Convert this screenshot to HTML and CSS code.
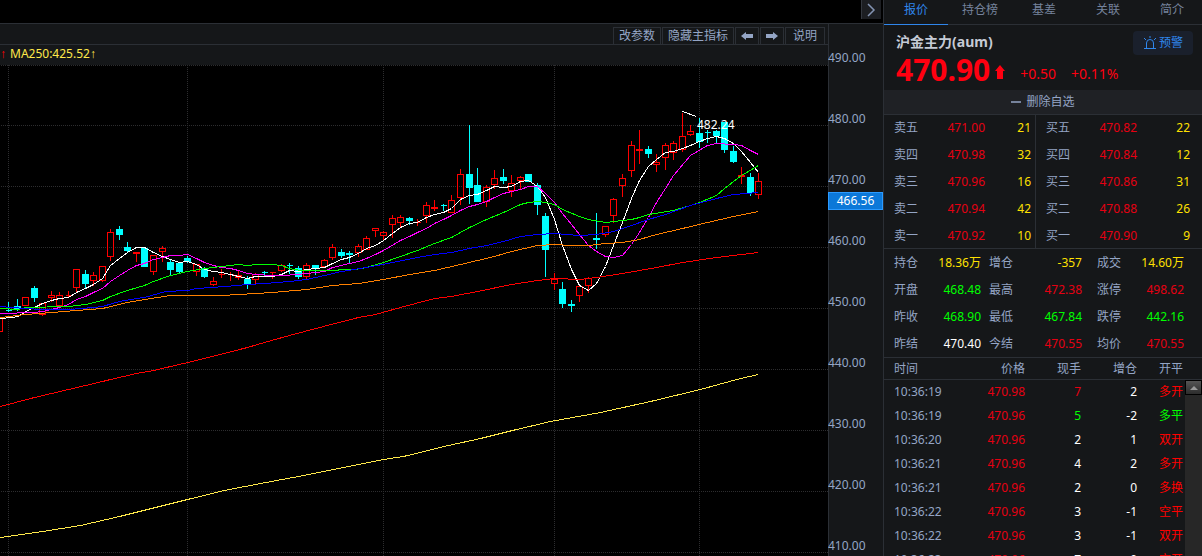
FILE: index.html
```
<!DOCTYPE html>
<html lang="zh-CN">
<head>
<meta charset="utf-8">
<title>沪金主力(aum)</title>
<link rel="stylesheet" href="styles.css">
</head>
<body>
<div class="app">
  <main class="market">
    <header class="topbar">
      <button class="collapse" type="button" aria-label="收起"><svg width="9" height="14" viewBox="0 0 9 14"><path d="M1 1l6 6-6 6"/></svg></button>
    </header>
    <div class="workspace">
      <section class="chart">
        <nav class="toolbar">
          <button class="tool" type="button">改参数</button>
          <button class="tool" type="button">隐藏主指标</button>
          <button class="tool tool-arrow" type="button" aria-label="向左"><svg width="12" height="8" viewBox="0 0 12 8"><path d="M0 4l5-4v2h7v4H5v2z"/></svg></button>
          <button class="tool tool-arrow" type="button" aria-label="向右"><svg width="12" height="8" viewBox="0 0 12 8"><path d="M12 4L7 0v2H0v4h7v2z"/></svg></button>
          <button class="tool tool-help" type="button">说明</button>
        </nav>
        <div class="averages"><span class="rise arrow">↑</span><span class="ma250">MA250:425.52<span class="arrow">↑</span></span></div>
        <svg class="plot" viewBox="0 65 828 491" preserveAspectRatio="none">
          <g class="grid" transform="translate(0 .5)">
            <path d="M1 65H828M1 125H828M1 186H828M1 247H828M1 308H828M1 369H828M1 430H828M1 491H828M1 552H828"/>
          </g>
          <g class="grid" transform="translate(.5 0)">
            <path d="M8 65V556M187 65V556M383 65V556M554 65V556M699 65V556"/>
          </g>
          <g class="pixel" transform="translate(.5 .5)">
            <path class="up" d="M-4 317h6v14h-6zM22 297h6v8h-6zM39 303h6v11h-6zM48 295h6v2h-6zM56 295h6v10h-6zM73 269h6v18h-6zM90 275h6v5h-6zM99 266h6v14h-6zM107 232h6v24h-6zM133 252h6v1h-6zM150 255h6v16h-6zM159 248h6v3h-6zM193 264h6v7h-6zM210 281h6v3h-6zM235 275h6v2h-6zM252 274h6v5h-6zM278 265h6v5h-6zM303 265h6v11h-6zM321 260h6v6h-6zM329 247h6v10h-6zM355 246h6v6h-6zM363 238h6v11h-6zM372 228h6v2h-6zM380 232h6v3h-6zM389 218h6v6h-6zM397 217h6v5h-6zM423 205h6v10h-6zM431 207h6v1h-6zM448 200h6v12h-6zM457 174h6v23h-6zM483 187h6v14h-6zM491 178h6v6h-6zM508 183h6v7h-6zM517 177h6v3h-6zM551 279h6v4h-6zM576 286h6v9h-6zM585 278h6v7h-6zM602 226h6v8h-6zM610 199h6v16h-6zM619 178h6v7h-6zM628 145h6v25h-6zM636 149h6v1h-6zM653 162h6v2h-6zM662 145h6v12h-6zM670 143h6v9h-6zM679 136h6v13h-6zM687 131h6v3h-6zM738 175h6v1h-6zM755 181h6v13h-6z"/>
            <path class="up" d="M65 295h6M68 290v7M218 274h6M221 268v9M227 274h6M230 271v9M269 272h6M272 272v6M414 222h6M417 218v7"/>
            <path class="up" d="M25 296v1M42 302v1M42 314v1M51 290v5M51 297v4M59 291v4M76 268v1M76 287v5M93 271v4M93 280v5M102 265v1M102 280v1M110 228v4M110 256v4M136 251v10M153 254v1M153 271v3M162 245v3M162 251v10M196 271v4M213 276v5M213 284v1M238 270v5M238 277v2M255 272v2M255 279v4M281 263v2M281 270v1M306 262v3M306 276v2M324 258v2M332 243v4M332 257v2M358 243v3M358 252v4M366 235v3M375 227v1M375 230v6M383 230v2M383 235v4M392 214v4M392 224v13M400 214v3M400 222v5M426 201v4M426 215v7M434 199v11M451 194v6M460 168v6M460 197v7M486 184v3M486 201v5M494 169v9M494 184v4M511 174v9M511 190v6M520 175v2M520 180v8M554 272v7M554 283v6M579 284v2M579 295v6M588 276v2M588 285v7M605 234v2M613 197v2M613 215v7M622 173v5M622 185v11M631 140v5M631 170v6M639 129v34M656 153v9M656 164v7M665 142v3M665 157v12M673 140v3M673 152v7M682 112v24M682 149v2M690 124v7M690 134v1M741 166v17M758 172v9M758 194v4"/>
            <path class="down" d="M5 310h6M8 301v10M17 298v12M34 285v16M85 269v18M119 225v14M127 241v11M144 248v18M170 259v15M179 263v10M187 255v7M204 266v11M247 275v13M261 272h6M264 270v6M286 265h6M289 262v11M298 265v13M315 266v8M341 248v9M349 250v12M409 216v8M440 205h6M443 203v7M469 124v79M477 167v33M503 168v15M528 173v8M537 182v32M545 212v64M562 281v26M571 299v12M596 212v36M648 145v12M699 117v30M704 132h6M707 129v13M716 129v13M724 122v30M733 145v17M750 172v23"/>
          </g>
          <path class="down-body" d="M14 306h7v3h-7zM31 288h7v10h-7zM82 274h7v10h-7zM116 229h7v6h-7zM124 247h7v4h-7zM141 248h7v19h-7zM167 262h7v8h-7zM176 263h7v9h-7zM184 258h7v4h-7zM201 268h7v9h-7zM244 279h7v6h-7zM295 268h7v9h-7zM312 265h7v4h-7zM338 252h7v4h-7zM346 253h7v2h-7zM406 218h7v3h-7zM466 174h7v14h-7zM474 185h7v17h-7zM500 177h7v4h-7zM525 174h7v8h-7zM534 185h7v20h-7zM542 216h7v34h-7zM559 289h7v15h-7zM568 304h7v2h-7zM593 238h7v2h-7zM645 149h7v5h-7zM696 133h7v9h-7zM713 131h7v5h-7zM721 122h7v28h-7zM730 151h7v11h-7zM747 177h7v16h-7z"/>
          <g class="pixel" transform="translate(.5 .5)">
            <polyline class="ma5" points="0,318 11,317 18,316 25,311 34,307 42,303 51,300 59,298 68,297 76,292 85,288 93,284 102,278 110,265 119,258 127,252 136,247 144,247 153,252 162,256 170,259 179,262 187,261 196,264 204,269 213,271 221,272 230,274 238,276 247,278 255,276 272,276 281,274 289,270 298,271 306,269 315,268 324,267 332,263 341,259 349,257 358,253 366,248 375,245 383,240 392,233 400,227 409,223 417,222 426,217 434,214 443,212 451,208 460,199 469,195 477,194 486,190 494,186 503,187 511,186 520,181 528,180 537,186 545,197 554,219 562,245 571,269 579,285 588,290 596,283 605,266 613,245 622,222 631,198 639,180 648,166 656,159 665,152 673,151 682,148 690,145 699,141 707,138 716,136 724,138 733,143 741,151 750,162 758,172"/>
            <polyline class="ma10" points="0,313 34,312 42,311 51,309 59,307 68,304 76,299 85,296 93,292 102,288 110,281 119,275 127,270 136,265 144,263 153,259 162,257 170,255 179,255 187,254 196,258 204,262 213,265 221,267 230,268 238,270 247,273 255,274 272,275 281,275 298,274 306,273 324,271 332,267 349,263 358,261 366,258 375,254 383,250 400,240 409,236 417,232 426,228 434,223 443,219 451,215 460,210 469,206 477,204 486,201 494,197 503,193 511,191 520,189 528,186 537,186 545,193 554,202 562,213 571,224 579,234 588,245 596,251 605,256 613,257 622,255 631,244 639,232 648,217 656,202 665,188 673,175 690,155 707,145 716,143 733,144 741,145 750,150 758,154"/>
            <polyline class="ma20" points="0,308 18,309 25,307 68,306 85,304 102,300 110,296 127,290 144,285 153,281 170,275 187,271 204,268 221,266 238,264 247,265 256,264 272,264 281,265 289,268 300,270 335,270 341,269 354,269 366,267 383,262 400,256 417,250 434,243 451,237 469,227 486,219 503,212 520,204 528,202 537,201 545,202 554,204 562,209 579,216 588,219 605,222 622,220 631,219 639,217 648,214 673,210 690,205 699,202 716,195 724,188 741,175 758,165"/>
            <polyline class="ma40" points="0,306 11,307 25,308 42,309 68,309 93,307 102,306 119,301 136,298 144,297 165,291 187,290 196,288 225,286 247,284 264,283 289,281 306,279 324,275 341,271 366,267 392,262 417,257 434,254 451,252 469,248 486,245 503,241 520,236 537,234 554,233 579,235 596,234 613,231 631,225 648,219 665,214 690,205 716,198 733,194 758,192"/>
            <polyline class="ma60" points="0,317 25,314 51,312 76,310 102,308 127,302 144,299 170,295 221,295 255,293 272,292 306,289 332,285 358,283 383,279 409,274 434,270 460,264 477,260 494,256 511,251 537,245 554,244 571,245 588,245 605,243 622,242 639,239 656,234 682,228 707,222 733,216 758,211"/>
            <polyline class="ma120" points="0,406 34,397 68,389 102,381 110,379 136,373 153,370 196,360 247,347 264,342 289,335 323,326 358,317 375,314 400,307 434,298 451,296 477,291 511,284 537,280 554,278 580,279 596,277 622,273 656,267 682,262 716,257 758,252"/>
            <polyline class="line250" points="0,537 42,531 80,525 119,516 159,506 187,499 224,490 260,483 298,476 348,466 383,459 403,456 448,445 480,438 512,430 550,421 600,412 650,401 700,389 740,378 758,374"/>
            <path class="ma5" d="M682 111L696 116"/>
          </g>
          <text class="peak" x="697" y="129">482.24</text>
        </svg>
      </section>
      <aside class="axis">
        <span>490.00</span><span>480.00</span><span>470.00</span><span>460.00</span><span>450.00</span><span>440.00</span><span>430.00</span><span>420.00</span><span>410.00</span>
        <output class="cursor-price">466.56</output>
      </aside>
    </div>
  </main>

  <aside class="panel">
    <nav class="tabs">
      <button class="tab tab-active" type="button">报价</button>
      <button class="tab" type="button">持仓榜</button>
      <button class="tab" type="button">基差</button>
      <button class="tab" type="button">关联</button>
      <button class="tab" type="button">简介</button>
    </nav>
    <section class="quote">
      <div class="quote-head">
        <h1 class="name">沪金主力(aum)</h1>
        <button class="alert" type="button"><svg width="14" height="14" viewBox="0 0 14 14"><path d="M1 12.5h12M3.500 12V7a3.500 3.500 0 0 1 7 0v5M7 0v2M1 2l2 2M13 2l-2 2"/></svg>预警</button>
      </div>
      <div class="price-line">
        <strong class="last">470.90</strong>
        <svg class="price-arrow" width="10" height="14" viewBox="0 0 10 14"><path d="M5 0l5 6H8v8H2V6H0z"/></svg>
        <span class="change">+0.50</span>
        <span class="change">+0.11%</span>
      </div>
    </section>
    <button class="watch" type="button"><svg width="10" height="2" viewBox="0 0 10 2"><path d="M0 0h10v2H0z"/></svg>删除自选</button>

    <table class="book">
      <colgroup><col class="c-label"><col class="c-price"><col class="c-ask"><col class="c-label"><col class="c-price"><col class="c-bid"></colgroup>
      <tbody>
        <tr><th>卖五</th><td class="red">471.00</td><td class="yellow ask">21</td><th>买五</th><td class="red">470.82</td><td class="yellow bid">22</td></tr>
        <tr><th>卖四</th><td class="red">470.98</td><td class="yellow ask">32</td><th>买四</th><td class="red">470.84</td><td class="yellow bid">12</td></tr>
        <tr><th>卖三</th><td class="red">470.96</td><td class="yellow ask">16</td><th>买三</th><td class="red">470.86</td><td class="yellow bid">31</td></tr>
        <tr><th>卖二</th><td class="red">470.94</td><td class="yellow ask">42</td><th>买二</th><td class="red">470.88</td><td class="yellow bid">26</td></tr>
        <tr><th>卖一</th><td class="red">470.92</td><td class="yellow ask">10</td><th>买一</th><td class="red">470.90</td><td class="yellow bid">9</td></tr>
      </tbody>
    </table>

    <table class="stats">
      <colgroup><col class="s-label1"><col class="s-value1"><col class="s-label2"><col class="s-value2"><col class="s-label3"><col class="s-value3"></colgroup>
      <tbody>
        <tr><th>持仓</th><td class="yellow">18.36万</td><th class="mid">增仓</th><td class="yellow">-357</td><th class="far">成交</th><td class="yellow end">14.60万</td></tr>
        <tr><th>开盘</th><td class="green">468.48</td><th class="mid">最高</th><td class="red">472.38</td><th class="far">涨停</th><td class="red end">498.62</td></tr>
        <tr><th>昨收</th><td class="green">468.90</td><th class="mid">最低</th><td class="green">467.84</td><th class="far">跌停</th><td class="green end">442.16</td></tr>
        <tr><th>昨结</th><td class="white">470.40</td><th class="mid">今结</th><td class="red">470.55</td><th class="far">均价</th><td class="red end">470.55</td></tr>
      </tbody>
    </table>

    <section class="trades-box">
      <table class="trades">
        <colgroup><col class="t-time"><col class="t-price"><col class="t-vol"><col class="t-vol"><col class="t-kind"></colgroup>
        <thead><tr><th class="time">时间</th><th>价格</th><th>现手</th><th>增仓</th><th class="kind">开平</th></tr></thead>
        <tbody>
          <tr><td class="time">10:36:19</td><td class="red">470.98</td><td class="red">7</td><td>2</td><td class="kind bright">多开</td></tr>
          <tr><td class="time">10:36:19</td><td class="red">470.96</td><td class="green">5</td><td>-2</td><td class="kind green">多平</td></tr>
          <tr><td class="time">10:36:20</td><td class="red">470.96</td><td>2</td><td>1</td><td class="kind bright">双开</td></tr>
          <tr><td class="time">10:36:21</td><td class="red">470.96</td><td>4</td><td>2</td><td class="kind bright">多开</td></tr>
          <tr><td class="time">10:36:21</td><td class="red">470.96</td><td>2</td><td>0</td><td class="kind bright">多换</td></tr>
          <tr><td class="time">10:36:22</td><td class="red">470.96</td><td>3</td><td>-1</td><td class="kind bright">空平</td></tr>
          <tr><td class="time">10:36:22</td><td class="red">470.96</td><td>3</td><td>-1</td><td class="kind bright">双开</td></tr>
          <tr><td class="time">10:36:23</td><td class="red">470.96</td><td>7</td><td>0</td><td class="kind bright">空开</td></tr>
        </tbody>
      </table>
      <div class="scrollbar"><button class="scroll-up" type="button" aria-label="向上滚动"><svg width="8" height="4" viewBox="0 0 8 4"><path d="M4 0l4 4H0z"/></svg></button></div>
    </section>
  </aside>
</div>
</body>
</html>
```
FILE: styles.css
```
* { box-sizing: border-box; }
body {
  margin: 0;
  background: #151719;
  color: #94a5c5;
  font: 12px/16px "Noto Sans", "Noto Sans CJK SC", sans-serif;
}
button {
  margin: 0;
  padding: 0;
  border: 0;
  background: none;
  color: inherit;
  font: inherit;
}
svg { display: block; }

.app { display: flex; height: 100vh; overflow: hidden; }
.market { flex: 1; min-width: 0; display: flex; flex-direction: column; background: #151719; }
.topbar {
  display: flex;
  justify-content: flex-end;
  align-items: flex-start;
  height: 24px;
  padding-right: 2px;
  background: #000;
  border-bottom: 1px solid #2b2f35;
}
.collapse {
  display: flex;
  justify-content: center;
  align-items: center;
  width: 20px;
  height: 19px;
  background: #1c1e22;
  border-left: 1px solid #33373e;
}
.collapse path { fill: none; stroke: #8494b3; stroke-width: 1.5; }

.workspace { flex: 1; min-height: 0; display: flex; }
.chart { flex: 1; min-width: 0; display: flex; flex-direction: column; }
.toolbar {
  display: flex;
  justify-content: flex-end;
  align-items: flex-end;
  height: 21px;
  padding-right: 3px;
  border-bottom: 1px solid #2b2f35;
}
.tool {
  display: flex;
  justify-content: center;
  align-items: center;
  height: 17px;
  padding: 0 5px;
  margin-left: 1px;
  border: 1px solid #2b2f35;
  border-bottom: 0;
}
.tool-arrow { width: 24px; }
.tool-arrow svg { flex: none; }
.tool-arrow path { fill: #94a5c5; }
.tool-help { padding: 0 7px; }
.averages { display: flex; gap: 4px; height: 20px; line-height: 18px; }
.arrow { font-family: "Liberation Sans", sans-serif; }
.rise { color: #f00; }
.ma250 { color: #ffe94a; }
.plot { flex: 1; min-height: 0; width: 100%; background: #000; }
.pixel, .grid, .down-body { shape-rendering: crispEdges; fill: none; }
.grid { stroke: #2d2d2f; stroke-dasharray: 1 1; }
.up { stroke: #f00; }
.down { stroke: #0ff; }
.down-body { fill: #0ff; }
.ma5 { stroke: #fff; }
.ma10 { stroke: #f0f; }
.ma20 { stroke: #0f0; }
.ma40 { stroke: #00f; }
.ma60 { stroke: #ff8000; }
.ma120 { stroke: #f00; }
.line250 { stroke: #ffe94a; }
.peak { fill: #fff; }

.axis {
  position: relative;
  width: 55px;
  padding-top: 3px;
  overflow: hidden;
  box-shadow: inset 1px 0 #2b2f35;
}
.axis span { display: block; line-height: 61px; }
.cursor-price {
  position: absolute;
  top: 168px;
  left: 0;
  width: 100%;
  height: 18px;
  border: 1px solid #2b9aff;
  background: #0c78d8;
  color: #fff;
  line-height: 16px;
  text-align: center;
}

.panel {
  display: flex;
  flex-direction: column;
  width: 319px;
  border-left: 1px solid #2b2f35;
}
.tabs {
  display: grid;
  grid-template-columns: repeat(5, 1fr);
  flex: none;
  height: 25px;
  margin-right: -2px;
  border-bottom: 1px solid #2b2f35;
}
.tab { height: 25px; padding-bottom: 4px; color: #76839c; border-bottom: 1px solid transparent; }
.tab-active { color: #2f86ec; border-bottom-color: #2f86ec; }
.quote { flex: none; height: 65px; padding: 6px 9px 0 12px; }
.quote-head { display: flex; justify-content: space-between; height: 24px; }
.name { margin: 0; color: #c5cbd6; font-size: 14px; line-height: 22px; }
.alert {
  display: flex;
  align-items: center;
  justify-content: center;
  gap: 2px;
  width: 60px;
  height: 24px;
  border-radius: 4px;
  background: #1a202c;
  color: #2f86ec;
}
.alert path { fill: none; stroke: #2f86ec; }
.price-line { display: flex; align-items: center; height: 30px; color: #ff0010; }
.last { font-size: 30px; line-height: 30px; }
.price-arrow { margin: 4px 15px 0 5px; }
.price-arrow path { fill: #ff0010; }
.change { margin: 8px 15px 0 0; font-size: 14px; }
.watch {
  display: flex;
  flex: none;
  justify-content: center;
  align-items: center;
  gap: 5px;
  height: 24px;
  background: #1f2125;
}
.watch path { fill: #76839c; }

table { flex: none; width: 100%; table-layout: fixed; border-collapse: separate; border-spacing: 0; }
th, td { padding: 0; text-align: right; font-weight: 400; white-space: nowrap; }
.book { border-top: 1px solid #2b2f35; }
.book tr, .stats tr { height: 27px; }
.book th, .book td { padding-bottom: 2px; }
.book tr:last-child { height: 25px; }
.book tr:last-child > * { padding-bottom: 0; }
.book th, .stats th { padding-left: 10px; text-align: left; }
.book .ask { padding-right: 4px; border-right: 1px solid #2b2f35; }
.book .bid { padding-right: 12px; }
.c-label { width: 44px; }
.c-price { width: 57px; }
.c-ask { width: 51px; }
.stats { border-top: 1px solid #2b2f35; }
.stats .mid { padding-left: 8px; }
.stats .far { padding-left: 15px; }
.stats .end { padding-right: 18px; }
.s-label1 { width: 44px; }
.s-value1 { width: 53px; }
.s-label2 { width: 38px; }
.s-value2 { width: 63px; }
.s-label3 { width: 40px; }
.trades-box { position: relative; flex: 1; min-height: 0; overflow: hidden; border-top: 1px solid #2b2f35; }
.trades { color: #fff; }
.trades thead tr { height: 22px; }
.trades thead th { border-bottom: 1px solid #2b2f35; color: #94a5c5; }
.trades tbody tr { height: 24px; }
.trades .time { padding-left: 10px; color: #94a5c5; text-align: left; }
.trades .kind { padding-right: 19px; }
.t-time { width: 61px; }
.t-price { width: 80px; }
.t-vol { width: 56px; }
.scrollbar {
  position: absolute;
  top: 22px;
  right: 0;
  bottom: 0;
  width: 17px;
  background: #272727;
}
.scroll-up {
  display: flex;
  align-items: center;
  justify-content: center;
  width: 17px;
  height: 15px;
  border: 1px solid #000;
  background: linear-gradient(#555, #2c2c2c);
}
.scroll-up path { fill: #999; }
.red { color: #e60012; }
.trades .bright { color: #f00; }
.yellow { color: #ffe100; }
.green { color: #0f0; }
.white { color: #fff; }
```
